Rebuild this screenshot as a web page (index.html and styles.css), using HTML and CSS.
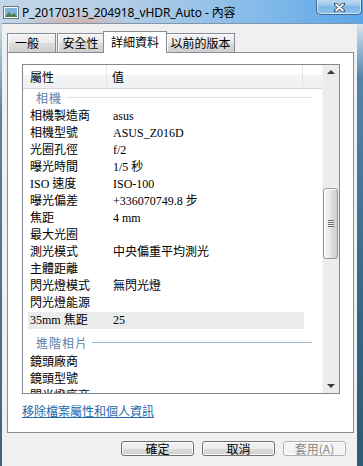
FILE: index.html
```html
<!DOCTYPE html>
<html lang="zh-Hant">
<head>
    <meta charset="UTF-8">
    <title>P_20170315_204918_vHDR_Auto - 內容</title>
    <link rel="stylesheet" href="styles.css">
</head>
<body>
    <div class="window">
        <div class="titlebar">
            <svg class="app-icon" width="16" height="13" viewBox="0 0 16 13">
                <rect x="0.5" y="0.5" width="15" height="12" fill="#f4f6f8" stroke="#6d7a86"/>
                <rect x="2" y="2" width="12" height="9" fill="#7fb3dc"/>
                <path d="M2 11 L6 6 L9 9 L11 7 L14 10 L14 11 Z" fill="#4f7f4a"/>
            </svg>
            <span class="title">P_20170315_204918_vHDR_Auto - 內容</span>
            <div class="close-btn">
                <svg width="11" height="9" viewBox="0 0 11 9">
                    <path d="M1.5 1 L9.5 8 M9.5 1 L1.5 8" stroke="#3c4a5a" stroke-width="3.4" stroke-linecap="square"/>
                    <path d="M1.5 1 L9.5 8 M9.5 1 L1.5 8" stroke="#fff" stroke-width="1.8"/>
                </svg>
            </div>
        </div>

        <div class="client">
            <div class="tabs">
                <div class="tab tab-general">一般</div>
                <div class="tab tab-security">安全性</div>
                <div class="tab tab-details active">詳細資料</div>
                <div class="tab tab-versions">以前的版本</div>
            </div>

            <div class="panel">
                <div class="listview">
                    <div class="lv-body">
                        <div class="lv-header">
                            <div class="col-name">屬性</div>
                            <div class="col-value">值</div>
                            <div class="col-rest"></div>
                        </div>

                        <div class="group group-camera"><span>相機</span><i></i></div>
                        <div class="row"><span class="name">相機製造商</span><span class="value">asus</span></div>
                        <div class="row"><span class="name">相機型號</span><span class="value">ASUS_Z016D</span></div>
                        <div class="row"><span class="name">光圈孔徑</span><span class="value">f/2</span></div>
                        <div class="row"><span class="name">曝光時間</span><span class="value">1/5 秒</span></div>
                        <div class="row"><span class="name">ISO 速度</span><span class="value">ISO-100</span></div>
                        <div class="row"><span class="name">曝光偏差</span><span class="value">+336070749.8 步</span></div>
                        <div class="row"><span class="name">焦距</span><span class="value">4 mm</span></div>
                        <div class="row"><span class="name">最大光圈</span><span class="value"></span></div>
                        <div class="row"><span class="name">測光模式</span><span class="value">中央偏重平均測光</span></div>
                        <div class="row"><span class="name">主體距離</span><span class="value"></span></div>
                        <div class="row"><span class="name">閃光燈模式</span><span class="value">無閃光燈</span></div>
                        <div class="row"><span class="name">閃光燈能源</span><span class="value"></span></div>
                        <div class="row hover"><span class="name">35mm 焦距</span><span class="value">25</span></div>

                        <div class="group group-advanced"><span>進階相片</span><i></i></div>
                        <div class="row"><span class="name">鏡頭廠商</span><span class="value"></span></div>
                        <div class="row"><span class="name">鏡頭型號</span><span class="value"></span></div>
                        <div class="row"><span class="name">閃光燈廠商</span><span class="value"></span></div>
                    </div>

                    <div class="scrollbar">
                        <div class="sb-btn"><span class="arrow-up"></span></div>
                        <div class="sb-space-top"></div>
                        <div class="sb-thumb"><span class="grip"></span></div>
                        <div class="sb-space"></div>
                        <div class="sb-btn"><span class="arrow-down"></span></div>
                    </div>
                </div>

                <a class="remove-link" href="#">移除檔案屬性和個人資訊</a>
            </div>

            <div class="buttons">
                <button class="btn">確定</button>
                <button class="btn">取消</button>
                <button class="btn btn-apply" disabled>套用(A)</button>
            </div>
        </div>
    </div>
</body>
</html>
```

FILE: styles.css
```css
/* Reset */
* {
    margin: 0;
    padding: 0;
    box-sizing: border-box;
}

body {
    width: 363px;
    height: 466px;
    overflow: hidden;
    font-family: "Noto Sans CJK TC", sans-serif;
    font-size: 12px;
    color: #000;
}

/* Aero frame */
.window {
    width: 363px;
    height: 466px;
    display: flex;
    flex-direction: column;
    background:
        linear-gradient(#d6e4ef, #4f86b0 12%, #356a8c 60%, #2d5a74) right 0 top 24px / 6px 442px no-repeat,
        linear-gradient(#c9d8e4, #5d8494 20%, #3e6676) left 0 top 24px / 2px 442px no-repeat,
        radial-gradient(ellipse 60px 14px at 75px 27px, rgba(236, 150, 120, 0.8), rgba(236, 150, 120, 0) 100%),
        linear-gradient(to right, #c4d6e7 0%, #b1cce6 35%, #86bbe9 70%, #5aa6ea 100%);
}

.titlebar {
    height: 23px;
    display: flex;
    align-items: center;
    padding-left: 3px;
    position: relative;
}

.app-icon {
    margin-right: 3px;
    margin-top: 1px;
}

.title {
    font-family: "Noto Sans", "Noto Sans CJK TC", sans-serif;
    font-size: 12px;
    letter-spacing: -0.1px;
}

.close-btn {
    position: absolute;
    left: 316px;
    top: -2px;
    width: 46px;
    height: 17px;
    border: 1px solid #4c6b8c;
    border-top: none;
    border-radius: 0 0 5px 5px;
    background: linear-gradient(#c5def5, #98c4ea 50%, #7db6e6 51%, #8cc2ee);
    box-shadow: inset 0 0 0 1px rgba(255, 255, 255, 0.55);
    display: flex;
    align-items: center;
    justify-content: center;
    padding-top: 2px;
}

/* Dialog client area */
.client {
    flex: 1;
    width: 355px;
    margin-left: 2px;
    background: #f0f0f0;
    border-top: 1px solid #7f97ae;
}

.tabs {
    height: 28px;
    display: flex;
    align-items: flex-end;
    padding-left: 5px;
}

.tab {
    height: 19px;
    border: 1px solid #898c95;
    border-bottom: none;
    background: linear-gradient(#f3f3f3, #ebebeb 50%, #dddddd 51%, #cfcfcf);
    box-shadow: inset 1px 1px 0 #fcfcfc;
    line-height: 17px;
    text-align: center;
}

.tab-general {
    width: 49px;
    text-align: left;
    padding-left: 7px;
}

.tab-security {
    width: 47px;
    margin-left: 1px;
}

.tab-details {
    width: 64px;
    margin-left: -1px;
}

.tab-versions {
    width: 69px;
    margin-left: -1px;
}

.tab.active {
    height: 22px;
    margin-bottom: -1px;
    background: #fff;
    box-shadow: none;
    line-height: 19px;
    position: relative;
    z-index: 2;
}

.panel {
    width: 347px;
    height: 381px;
    margin-left: 5px;
    border: 1px solid #898c95;
    background: #fff;
    padding: 11px 0 0 14px;
    position: relative;
    z-index: 1;
}

/* Property list */
.listview {
    width: 318px;
    height: 330px;
    border: 1px solid #828790;
    display: flex;
    font-family: "Liberation Serif", "Noto Sans CJK TC", serif;
    font-size: 12px;
}

.lv-body {
    flex: 1;
    overflow: hidden;
}

.lv-header {
    height: 24px;
    display: flex;
    border-bottom: 1px solid #d5d5d5;
    background: linear-gradient(#ffffff 0%, #ffffff 42%, #f3f4f6 45%, #eef0f2 100%);
    line-height: 23px;
    font-family: "Noto Sans CJK TC", sans-serif;
}

.col-name {
    width: 84px;
    padding-left: 7px;
    border-right: 1px solid #e2e4e8;
}

.col-value {
    width: 196px;
    padding-left: 5px;
    border-right: 1px solid #e2e4e8;
}

.col-rest {
    flex: 1;
}

.group {
    display: flex;
    align-items: center;
    padding-left: 13px;
    padding-right: 10px;
    color: #5d7ea6;
    font-family: "Noto Sans CJK TC", sans-serif;
    letter-spacing: 1px;
}

.group i {
    flex: 1;
    height: 1px;
    margin-left: 4px;
    background: #e0e5ea;
}

.group-camera {
    height: 19px;
    padding-bottom: 3px;
}

.group-advanced {
    height: 25px;
    padding-top: 1px;
}

.group-advanced i {
    background: #a9bccb;
}

.row {
    width: 276px;
    height: 17px;
    margin-left: 5px;
    display: flex;
    line-height: 17px;
}

.row.hover {
    background: #ebebeb;
}

.row .name {
    width: 85px;
    padding-left: 2px;
    white-space: nowrap;
}

.row .value {
    white-space: nowrap;
}

.scrollbar {
    width: 17px;
    display: flex;
    flex-direction: column;
    background: #ececec;
    border-left: 1px solid #f4f4f4;
}

.sb-btn {
    height: 17px;
    display: flex;
    align-items: center;
    justify-content: center;
}

.arrow-up {
    border-left: 4px solid transparent;
    border-right: 4px solid transparent;
    border-bottom: 4px solid #3b3b3b;
    margin-top: -3px;
}

.arrow-down {
    border-left: 4px solid transparent;
    border-right: 4px solid transparent;
    border-top: 4px solid #3b3b3b;
    margin-top: 3px;
}

.sb-space-top {
    height: 106px;
}

.sb-thumb {
    height: 71px;
    margin: 0 1px 0 0;
    border: 1px solid #989898;
    border-radius: 3px;
    background: linear-gradient(to right, #f6f6f6, #ebebeb 45%, #dcdcdc 55%, #cfcfcf);
    box-shadow: inset 1px 1px 0 #fff;
    display: flex;
    align-items: center;
    justify-content: center;
}

.grip {
    width: 6px;
    height: 7px;
    background: repeating-linear-gradient(#6e6e6e 0, #6e6e6e 1px, #eeeeee 1px, #eeeeee 2px);
}

.sb-space {
    flex: 1;
}

.remove-link {
    display: inline-block;
    margin-top: 9px;
    color: #1c69ab;
    text-decoration: underline;
    line-height: 16px;
}

/* Dialog buttons */
.buttons {
    display: flex;
    justify-content: flex-end;
    gap: 8px;
    margin-top: 8px;
    padding-right: 11px;
}

.btn {
    width: 73px;
    height: 15px;
    border: 1px solid #707070;
    border-radius: 3px;
    background: linear-gradient(#f2f2f2, #ebebeb 50%, #dddddd 51%, #cfcfcf);
    box-shadow: inset 0 0 0 1px #fbfbfb;
    font-family: "Noto Sans CJK TC", sans-serif;
    font-size: 12px;
    line-height: 12px;
    color: #000;
}

.btn-apply {
    width: 63px;
    border-color: #adb2b5;
    background: #f4f4f4;
    color: #8a8a8a;
}
```
